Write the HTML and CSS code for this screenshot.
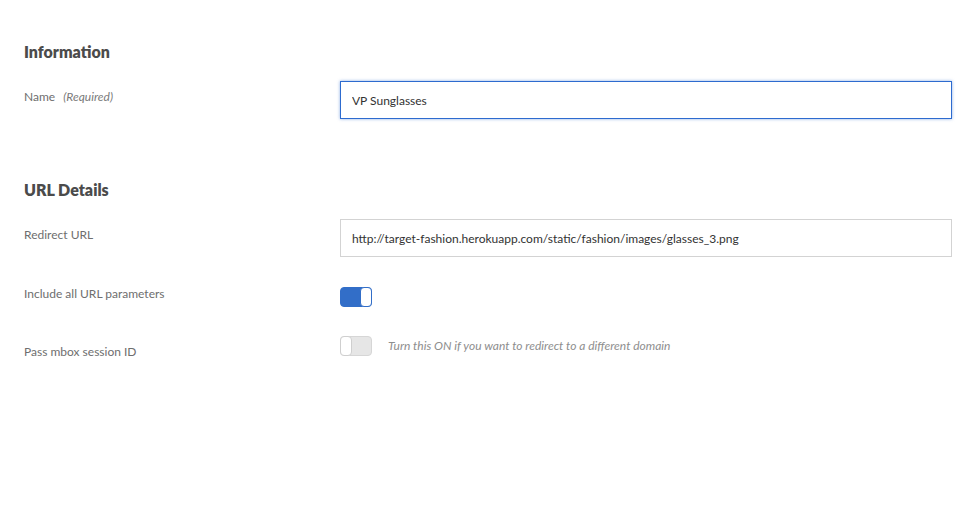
FILE: index.html
```html
<!DOCTYPE html>
<html lang="en">
<head>
    <meta charset="UTF-8">
    <meta name="viewport" content="width=device-width, initial-scale=1.0">
    <title>Redirect Offer</title>
    <link rel="stylesheet" href="styles.css">
</head>
<body>
    <div class="form">
        <h2 class="section-title">Information</h2>
        <div class="row">
            <div class="label">Name <em class="req">(Required)</em></div>
            <div class="field">
                <input class="text-input focused" type="text" value="VP Sunglasses">
            </div>
        </div>

        <h2 class="section-title second">URL Details</h2>
        <div class="row">
            <div class="label">Redirect URL</div>
            <div class="field">
                <input class="text-input" type="text" value="http://target-fashion.herokuapp.com/static/fashion/images/glasses_3.png">
            </div>
        </div>

        <div class="row row-switch">
            <div class="label">Include all URL parameters</div>
            <div class="field">
                <span class="switch on"><span class="knob"></span></span>
            </div>
        </div>

        <div class="row row-switch last">
            <div class="label">Pass mbox session ID</div>
            <div class="field">
                <span class="switch"><span class="knob"></span></span>
                <span class="hint">Turn this ON if you want to redirect to a different domain</span>
            </div>
        </div>
    </div>
</body>
</html>
```

FILE: styles.css
```css
body {
    margin: 0;
    background: #ffffff;
    font-family: Lato, "Open Sans", Arial, sans-serif;
    color: #6e6e6e;
    font-size: 12px;
}
.form {
    padding: 42px 28px 0 24px;
}
.section-title {
    margin: 0 0 19px 0;
    font-size: 16px;
    line-height: 20px;
    font-weight: 800;
    color: #4b4b4b;
}
.section-title.second {
    margin-top: 61px;
}
.row {
    display: flex;
    align-items: flex-start;
}
.label {
    width: 316px;
    flex: none;
    padding-top: 8px;
    line-height: 16px;
}
.req {
    margin-left: 5px;
    color: #7a7a7a;
}
.field {
    flex: 1;
    display: flex;
    align-items: center;
}
.text-input {
    width: 100%;
    height: 38px;
    box-sizing: border-box;
    border: 1px solid #d3d3d3;
    border-radius: 0;
    padding: 0 11px;
    font-family: inherit;
    font-size: 12px;
    color: #323232;
    outline: none;
}
.text-input.focused {
    border-color: #2d6bcf;
    box-shadow: 0 0 3px rgba(45, 107, 207, 0.55);
}

/* toggle rows */
.row-switch {
    margin-top: 30px;
}
.row-switch .label {
    padding-top: 0;
    margin-top: -1px;
}
.row-switch.last {
    margin-top: 29px;
}
.row-switch.last .label {
    padding-top: 8px;
    margin-top: 0;
}
.switch {
    width: 32px;
    height: 20px;
    box-sizing: border-box;
    border-radius: 4px;
    background: #e6e6e6;
    border: 1px solid #d6d6d6;
    display: flex;
    flex: none;
}
.switch .knob {
    width: 12px;
    height: 20px;
    box-sizing: border-box;
    margin: -1px 0 0 -1px;
    background: #ffffff;
    border: 1px solid #cfcfcf;
    border-radius: 4px;
}
.switch.on {
    background: #326ec8;
    border-color: #326ec8;
    justify-content: flex-end;
}
.switch.on .knob {
    margin: -1px -1px 0 0;
    border: 1.5px solid #326ec8;
}
.hint {
    margin-left: 16px;
    font-style: italic;
    color: #8e8e8e;
    line-height: 16px;
}
```
